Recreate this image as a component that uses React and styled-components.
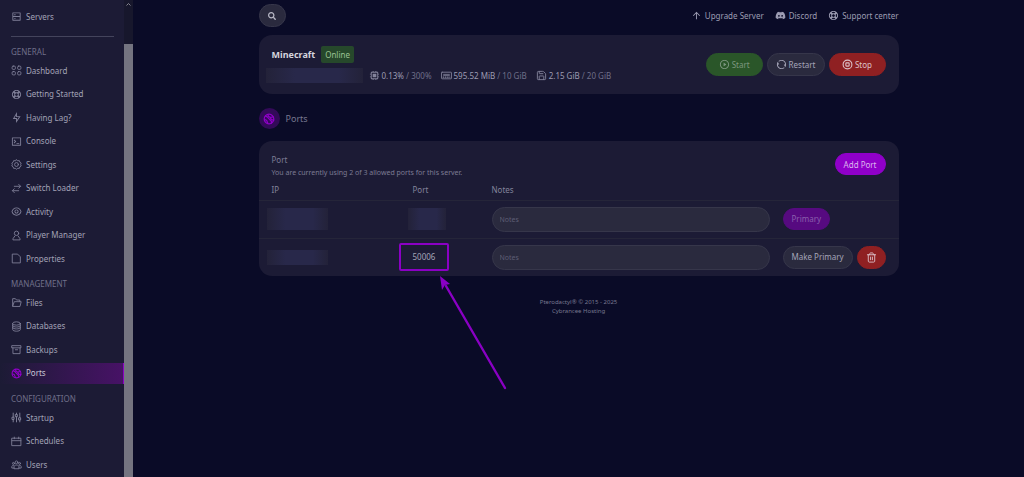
import React from "react";
import styled, { createGlobalStyle } from "styled-components";
import {
  RiServerLine,
  RiLifebuoyLine,
  RiFlashlightLine,
  RiTerminalBoxLine,
  RiEyeLine,
  RiArchiveLine,
  RiCpuLine,
  RiPlayCircleLine,
  RiRefreshLine,
  RiArrowUpLine,
  RiDiscordFill,
} from "react-icons/ri";
import { FaSearch } from "react-icons/fa";
import { LuTrash2, LuSave } from "react-icons/lu";

const Icon = ({ children, ...rest }) => (
  <svg
    viewBox="0 0 20 20"
    width="11"
    height="11"
    fill="none"
    stroke="currentColor"
    strokeWidth="1.6"
    strokeLinecap="round"
    strokeLinejoin="round"
    {...rest}
  >
    {children}
  </svg>
);

const DashboardIcon = () => (
  <Icon>
    <rect x="2" y="2" width="6" height="6" rx="2" />
    <rect x="12" y="2" width="6" height="6" rx="2" />
    <rect x="2" y="12" width="6" height="6" rx="2" />
    <rect x="12" y="12" width="6" height="6" rx="2" />
  </Icon>
);

const SettingsIcon = () => (
  <Icon>
    <path d="M10 1.5l2.3 1.7 2.9-.2.9 2.8 2.4 1.6-1 2.6 1 2.7-2.4 1.6-.9 2.7-2.9-.1-2.3 1.7-2.3-1.7-2.9.1-.9-2.7-2.4-1.6 1-2.7-1-2.6 2.4-1.6L4.8 3l2.9.2z" />
    <circle cx="10" cy="10" r="3.5" />
  </Icon>
);

const SwitchIcon = () => (
  <Icon>
    <path d="M6 6h11M14 2.5L17.5 6 14 9.5M14 14H3M6 10.5L2.5 14 6 17.5" />
  </Icon>
);

const PlayerIcon = () => (
  <Icon>
    <circle cx="10" cy="6" r="4" />
    <path d="M7 11l-3.5 5v2h13v-2L13 11" />
  </Icon>
);

const FileIcon = () => (
  <Icon>
    <path d="M3 2h9l5 5v11H3z" />
  </Icon>
);

const FolderIcon = () => (
  <Icon>
    <path d="M3 16V3h5l2 2.5h6V8M3 16.5L6 8.5h12.5l-2 8z" />
  </Icon>
);

const DatabaseIcon = () => (
  <Icon>
    <ellipse cx="10" cy="4.5" rx="7" ry="3" />
    <path d="M3 4.5v11c0 4 14 4 14 0v-11M3 8.5c0 3.5 14 3.5 14 0M3 12c0 3.5 14 3.5 14 0" />
  </Icon>
);

const BackupIcon = () => (
  <Icon>
    <path d="M2 3h16v4H2zM3.5 7v10.500h13V7M8 10.500h4" />
  </Icon>
);

const PortsIcon = () => (
  <Icon strokeWidth="2">
    <circle cx="10" cy="10" r="8" />
    <path d="M4 5l3 1.500 7 7.500v3M8 2.500l1 3 3 2 5-1M3 11l3 1 2 5M12 7.500l2 3.500 4 1" />
  </Icon>
);

const SlidersIcon = () => (
  <Icon strokeWidth="1.8">
    <path d="M4 2v7M4 14v4M10 2v2M10 9v9M16 2v8M16 15v3" />
    <path d="M2.5 9.500h3v4h-3zM8.500 4.500h3v4h-3zM14.500 10.500h3v4h-3z" />
  </Icon>
);

const CalendarIcon = () => (
  <Icon>
    <path d="M2 4h16v13.500H2zM2 8.500h16M6 2v3M14 2v3" />
  </Icon>
);

const UsersIcon = () => (
  <Icon>
    <circle cx="10" cy="6" r="2.5" />
    <circle cx="4.5" cy="8" r="1.8" />
    <circle cx="15.5" cy="8" r="1.8" />
    <path d="M5.500 17v-3c0-4 9-4 9 0v3zM5.500 16.500H1.500v-2.500c0-1.500 1-2.500 3-2.500M14.500 16.500h4v-2.500c0-1.500-1-2.500-3-2.500" />
  </Icon>
);

const MemoryIcon = () => (
  <Icon>
    <rect x="1" y="4" width="18" height="12" rx="1" />
    <path d="M4 7h12v4H4z" fill="currentColor" stroke="none" opacity="0.7" />
    <path d="M4 13h1M8 13h1M12 13h1M16 13h0" strokeWidth="2" />
  </Icon>
);

const StopIcon = () => (
  <Icon strokeWidth="2">
    <circle cx="10" cy="10" r="8" />
    <rect x="7" y="7" width="6" height="6" rx="1" />
  </Icon>
);

const sections = [
  {
    title: "GENERAL",
    height: 209,
    items: [
      { name: "Dashboard", icon: DashboardIcon },
      { name: "Getting Started", icon: RiLifebuoyLine },
      { name: "Having Lag?", icon: RiFlashlightLine },
      { name: "Console", icon: RiTerminalBoxLine },
      { name: "Settings", icon: SettingsIcon },
      { name: "Switch Loader", icon: SwitchIcon },
      { name: "Activity", icon: RiEyeLine },
      { name: "Player Manager", icon: PlayerIcon },
      { name: "Properties", icon: FileIcon },
    ],
  },
  {
    title: "MANAGEMENT",
    height: 92,
    items: [
      { name: "Files", icon: FolderIcon },
      { name: "Databases", icon: DatabaseIcon },
      { name: "Backups", icon: BackupIcon },
      { name: "Ports", icon: PortsIcon, active: true },
    ],
  },
  {
    title: "CONFIGURATION",
    height: 68,
    items: [
      { name: "Startup", icon: SlidersIcon },
      { name: "Schedules", icon: CalendarIcon },
      { name: "Users", icon: UsersIcon },
    ],
  },
];

const Sidebar = () => (
  <Side>
    <Nav>
      <NavLink href="#servers">
        <RiServerLine />
        Servers
      </NavLink>
      <Divider />
      {sections.map((section) => (
        <React.Fragment key={section.title}>
          <SectionTitle>{section.title}</SectionTitle>
          <NavList $height={section.height}>
            {section.items.map(({ name, icon: ItemIcon, active }) => (
              <li key={name}>
                <NavLink href={`#${name}`} $active={active}>
                  <ItemIcon />
                  {name}
                </NavLink>
              </li>
            ))}
          </NavList>
        </React.Fragment>
      ))}
    </Nav>
    <Scrollbar>
      <svg width="5" height="3" viewBox="0 0 10 6" fill="none">
        <path d="M1 5l4-4 4 4" stroke="#85858f" strokeWidth="2" />
      </svg>
      <Thumb />
    </Scrollbar>
  </Side>
);

const App = () => {
  return (
    <Page>
      <GlobalStyle />
      <Sidebar />
      <Main>
        <Content>
          <TopBar>
            <SearchButton aria-label="Search">
              <FaSearch />
            </SearchButton>
            <TopLinks>
              <a href="#upgrade">
                <RiArrowUpLine /> Upgrade Server
              </a>
              <a href="#discord">
                <RiDiscordFill /> Discord
              </a>
              <a href="#support">
                <RiLifebuoyLine /> Support center
              </a>
            </TopLinks>
          </TopBar>

          <ServerCard>
            <div>
              <ServerName>
                <h1>Minecraft</h1>
                <Status>Online</Status>
              </ServerName>
              <Stats>
                <Redacted $width={97} $height={15} />
                <StatList>
                  <Stat>
                    <RiCpuLine />
                    <span>0.13% <small>/ 300%</small></span>
                  </Stat>
                  <Stat>
                    <MemoryIcon />
                    <span>595.52 MiB <small>/ 10 GiB</small></span>
                  </Stat>
                  <Stat>
                    <LuSave />
                    <span>2.15 GiB <small>/ 20 GiB</small></span>
                  </Stat>
                </StatList>
              </Stats>
            </div>
            <Actions>
              <Button $color="green" disabled>
                <RiPlayCircleLine /> Start
              </Button>
              <Button>
                <RiRefreshLine /> Restart
              </Button>
              <Button $color="red">
                <StopIcon /> Stop
              </Button>
            </Actions>
          </ServerCard>

          <Heading>
            <HeadingIcon>
              <PortsIcon />
            </HeadingIcon>
            <h2>Ports</h2>
          </Heading>

          <PortCard>
            <PortTop>
              <div>
                <h3>Port</h3>
                <p>You are currently using 2 of 3 allowed ports for this server.</p>
              </div>
              <Button $color="purple">Add Port</Button>
            </PortTop>
            <PortTable>
              <thead>
                <tr>
                  <Th $width={141}>IP</Th>
                  <Th $width={79}>Port</Th>
                  <Th>Notes</Th>
                  <Th $width={129} aria-label="Actions" />
                </tr>
              </thead>
              <tbody>
                <tr>
                  <td>
                    <Redacted $width={61} $height={22} />
                  </td>
                  <td>
                    <Redacted $width={38} $height={22} />
                  </td>
                  <td>
                    <NotesInput aria-label="Notes" placeholder="Notes" />
                  </td>
                  <td>
                    <Button $color="dimPurple" disabled>
                      Primary
                    </Button>
                  </td>
                </tr>
                <tr>
                  <td>
                    <Redacted $width={61} $height={15} />
                  </td>
                  <td>
                    <PortNumber>
                      50006
                      <Highlight />
                      <Arrow viewBox="0 0 70 116">
                        <path d="M66 112L7 10" stroke="#8a00c4" strokeWidth="2.4" strokeLinecap="round" />
                        <path d="M1 0l10 8-5 1-3 5z" fill="#8a00c4" />
                      </Arrow>
                    </PortNumber>
                  </td>
                  <td>
                    <NotesInput aria-label="Notes" placeholder="Notes" />
                  </td>
                  <td>
                    <RowActions>
                      <Button>Make Primary</Button>
                      <Button $color="red" aria-label="Delete port">
                        <LuTrash2 />
                      </Button>
                    </RowActions>
                  </td>
                </tr>
              </tbody>
            </PortTable>
          </PortCard>

          <Footer>
            <p>Pterodactyl® © 2015 - 2025</p>
            <p>Cybrancee Hosting</p>
          </Footer>
        </Content>
      </Main>
    </Page>
  );
};

export default App;

const colors = {
  gray: { bg: "#2a2a3e", border: "#36364a", text: "#a5a5b8" },
  green: { bg: "#2a5629", border: "#2a5629", text: "#7c967f" },
  red: { bg: "#8f2022", border: "#8f2022", text: "#dcc0c8" },
  purple: { bg: "#9000c9", border: "#9000c9", text: "#dcb5ee" },
  dimPurple: { bg: "#560a80", border: "#560a80", text: "#8b5fae" },
};

const GlobalStyle = createGlobalStyle`
  * {
    box-sizing: border-box;
    margin: 0;
    padding: 0;
  }
  body {
    background-color: #0a0b27;
    color: #9c9cb2;
    font-family: "Noto Sans", "Open Sans", sans-serif;
    font-size: 8px;
    line-height: 12px;
  }
  button, input {
    font: inherit;
  }
  a {
    color: inherit;
    text-decoration: none;
  }
  svg {
    flex-shrink: 0;
  }
`;
const Page = styled.div`
  display: flex;
  height: 100vh;
  overflow: hidden;
`;
const Side = styled.aside`
  display: flex;
  flex-shrink: 0;
  background-color: #1c1b35;
`;
const Nav = styled.nav`
  width: 124px;
  padding-top: 6px;
  overflow: hidden;
`;
const NavList = styled.ul`
  display: grid;
  align-content: space-between;
  height: ${(props) => props.$height}px;
  list-style: none;
`;
const NavLink = styled.a`
  display: flex;
  align-items: center;
  gap: 4px;
  height: 21px;
  padding-left: 11px;
  color: ${(props) => (props.$active ? "#c9c5d6" : "#a2a2b5")};
  background: ${(props) =>
    props.$active ? "linear-gradient(90deg, #1c1b35, #471266)" : "none"};
  border-right: ${(props) => (props.$active ? "1px solid #8a00c4" : "none")};

  svg {
    width: 11px;
    height: 11px;
    color: ${(props) => (props.$active ? "#9000c9" : "#7f7f98")};
  }
`;
const Divider = styled.hr`
  margin: 9px 10px 0 11px;
  border: none;
  border-top: 1px solid #44445c;
`;
const SectionTitle = styled.h4`
  padding: 9px 0 2px 11px;
  font-size: 8px;
  font-weight: 400;
  color: #6f6f89;
`;
const Scrollbar = styled.div`
  display: flex;
  flex-direction: column;
  align-items: center;
  width: 9px;
  padding-top: 3px;
  background-color: #17172c;
`;
const Thumb = styled.div`
  flex: 1;
  width: 9px;
  margin-top: 38px;
  background-color: #747480;
`;
const Main = styled.main`
  flex: 1;
  padding: 4px 20px;
`;
const Content = styled.div`
  max-width: 640px;
  margin: 0 auto;
`;
const TopBar = styled.header`
  display: flex;
  justify-content: space-between;
  align-items: center;
`;
const SearchButton = styled.button`
  display: flex;
  align-items: center;
  justify-content: center;
  width: 27px;
  height: 23px;
  border: 1px solid #36364a;
  border-radius: 12px;
  background-color: #2a2a3e;
  color: #b8b8c6;
`;
const TopLinks = styled.div`
  display: flex;
  gap: 11px;

  a {
    display: flex;
    align-items: center;
    gap: 3px;
  }
  svg {
    width: 11px;
    height: 11px;
  }
`;
const ServerCard = styled.section`
  display: flex;
  justify-content: space-between;
  align-items: center;
  margin-top: 8px;
  padding: 11px 13px;
  border-radius: 13px;
  background-color: #1c1b35;
`;
const ServerName = styled.div`
  display: flex;
  align-items: center;
  gap: 6px;

  h1 {
    font-size: 9px;
    font-weight: 700;
    color: #d5d5de;
  }
`;
const Status = styled.span`
  padding: 3px 4px 2px;
  border-radius: 2px;
  background-color: #26482b;
  color: #9cc394;
`;
const Stats = styled.div`
  display: flex;
  align-items: center;
  gap: 6px;
  margin: 5px 0 0 -6px;
`;
const StatList = styled.div`
  display: flex;
  gap: 9px;
`;
const Stat = styled.div`
  display: flex;
  align-items: center;
  gap: 2px;

  svg {
    width: 11px;
    height: 11px;
    color: #83839b;
  }
  small {
    font-size: 8px;
    color: #6f6f89;
  }
`;
const Redacted = styled.div`
  width: ${(props) => props.$width}px;
  height: ${(props) => props.$height}px;
  background: linear-gradient(90deg, #232239, #28284a 30%, #28284a 75%, #232239);
`;
const Actions = styled.div`
  display: flex;
  gap: 4px;
`;
const Button = styled.button`
  display: inline-flex;
  align-items: center;
  justify-content: center;
  gap: 2px;
  min-width: 29px;
  height: ${(props) => (props.$color?.endsWith("urple") ? 22 : 23)}px;
  padding: 0 8px;
  border: 1px solid ${(props) => colors[props.$color || "gray"].border};
  border-radius: 12px;
  background-color: ${(props) => colors[props.$color || "gray"].bg};
  color: ${(props) => colors[props.$color || "gray"].text};
  white-space: nowrap;

  svg {
    width: 11px;
    height: 11px;
  }
  ${Actions} & {
    min-width: 57px;
  }
`;
const Heading = styled.div`
  display: flex;
  align-items: center;
  gap: 6px;
  margin: 14px 0 12px;

  h2 {
    font-size: 9px;
    font-weight: 400;
    color: #77778f;
  }
`;
const HeadingIcon = styled.div`
  display: flex;
  align-items: center;
  justify-content: center;
  width: 21px;
  height: 21px;
  border-radius: 50%;
  background-color: #330a59;
  color: #9000c9;

  svg {
    width: 12px;
    height: 12px;
  }
`;
const PortCard = styled.section`
  border-radius: 13px;
  background-color: #1c1b35;
`;
const PortTop = styled.div`
  display: flex;
  justify-content: space-between;
  align-items: flex-start;
  padding: 12px 13px 0;
  line-height: 13px;
  color: #7c7c94;

  h3 {
    font-size: 8px;
    font-weight: 400;
  }
  p {
    font-size: 7px;
  }
`;
const PortTable = styled.table`
  width: 100%;
  margin-top: 5px;
  border-collapse: collapse;
  table-layout: fixed;

  td {
    height: 38px;
    padding-left: 13px;
    border-top: 1px solid #252539;
    vertical-align: middle;
  }
  td ${Redacted} {
    margin-left: -5px;
  }
`;
const Th = styled.th`
  width: ${(props) => (props.$width ? `${props.$width}px` : "auto")};
  height: 16px;
  padding-left: 13px;
  font-weight: 400;
  text-align: left;
  vertical-align: top;
  color: #83839b;
`;
const NotesInput = styled.input`
  display: block;
  width: 100%;
  height: 25px;
  padding: 0 7px;
  border: 1px solid #36364a;
  border-radius: 13px;
  background-color: #2a2a3e;
  color: #a5a5b8;
  font-size: 7px;

  &::placeholder {
    color: #5e5e75;
  }
`;
const PortNumber = styled.div`
  position: relative;
  color: #a5a5b8;
`;
/* marker drawn over the port number */
const Highlight = styled.div`
  position: absolute;
  top: -8px;
  left: -14px;
  width: 50px;
  height: 28px;
  border: 2px solid #8a00c4;
  border-radius: 2px;
`;
const Arrow = styled.svg`
  position: absolute;
  top: 25px;
  left: 26px;
  width: 70px;
  height: 116px;
`;
const RowActions = styled.div`
  display: flex;
  gap: 4px;
`;
const Footer = styled.footer`
  margin-top: 22px;
  text-align: center;
  font-size: 6px;
  line-height: 9px;
  color: #77778f;
`;
